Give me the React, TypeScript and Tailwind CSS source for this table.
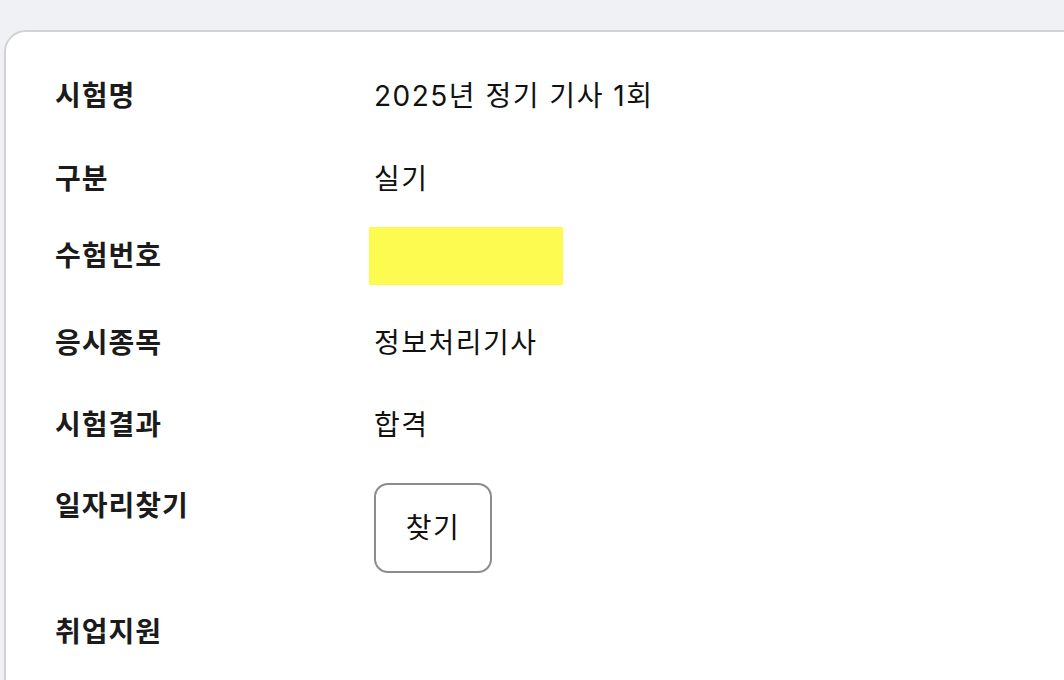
const rows = [
  { label: "시험명", value: "2025년 정기 기사 1회" },
  { label: "구분", value: "실기" },
];

export default function App() {
  return (
    <div
      className="h-[680px] w-[1064px] overflow-hidden bg-[#f0f1f5] pt-[30px] pl-1"
      style={{ fontFamily: 'Inter, "Noto Sans CJK KR", sans-serif' }}
    >
      <div className="h-[720px] w-[1120px] rounded-tl-[22px] border-2 border-[#d2d2d4] bg-white pt-[43px] pl-[49px] text-[28px] leading-[42px] text-[#111]">
        {rows.map((r, i) => (
          <div key={r.label} className={i === 0 ? "flex" : "mt-[41px] flex"}>
            <div className="w-[319px] font-bold tracking-[1px] text-[#1b1b1b]">{r.label}</div>
            <div className="tracking-[1.5px]">{r.value}</div>
          </div>
        ))}

        <div className="mt-[27px] flex items-center">
          <div className="w-[319px] font-bold tracking-[1px] text-[#1b1b1b]">수험번호</div>
          <div className="ml-[-5px] h-[58px] w-[194px] bg-[#fdfb4f]" />
        </div>

        <div className="mt-[37px] flex">
          <div className="w-[319px] font-bold tracking-[1px] text-[#1b1b1b]">응시종목</div>
          <div className="tracking-[1.5px]">정보처리기사</div>
        </div>

        <div className="mt-[40px] flex">
          <div className="w-[319px] font-bold tracking-[1px] text-[#1b1b1b]">시험결과</div>
          <div className="tracking-[1.5px]">합격</div>
        </div>

        <div className="mt-[37px] flex items-start">
          <div className="mt-[2px] w-[319px] font-bold tracking-[1px] text-[#1b1b1b]">일자리찾기</div>
          <button className="flex h-[90px] w-[118px] items-center justify-center rounded-[14px] border-2 border-[#8c8c8c] bg-white text-[28px] tracking-[1.5px] text-[#111]">
            찾기
          </button>
        </div>

        <div className="mt-[38px] flex">
          <div className="w-[319px] font-bold tracking-[1px] text-[#1b1b1b]">취업지원</div>
        </div>
      </div>
    </div>
  );
}
